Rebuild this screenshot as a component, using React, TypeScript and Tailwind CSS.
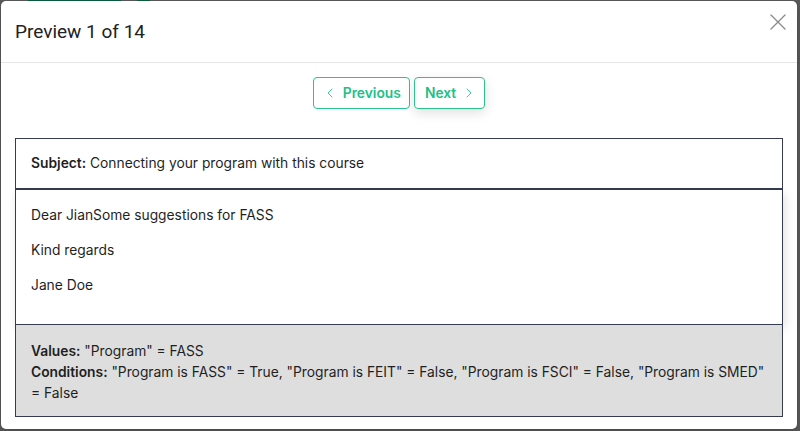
import { ChevronLeft, ChevronRight, X } from "lucide-react";

export default function App() {
  return (
    <div className="relative w-[800px] h-[431px] overflow-hidden bg-[#5a5a5a] pl-[1px] pt-[1px] pr-[3px] pb-[2px]">
      {/* page behind the overlay */}
      <div className="absolute top-0 left-[28px] w-[93px] h-[1px] bg-[#0b5e40]" />
      <div className="absolute top-0 left-[137px] w-[13px] h-[1px] bg-[#0b5e40]" />

      <div className="relative h-full rounded-[5px] bg-white shadow-[0_4px_12px_rgba(0,0,0,0.2)] font-['Roboto',sans-serif]">
        <div className="flex h-[62px] items-start justify-between border-b border-[#e6e6e6] pl-[14px] pr-[5px]">
          <h2 className="mt-[21px] text-[19px] leading-[20px] text-[#222]">Preview 1 of 14</h2>
          <X className="mt-[7px] h-[28px] w-[28px] text-[#8a8a8a]" strokeWidth={1.1} />
        </div>

        <div className="flex justify-center gap-[4px] pt-[14px] font-['Inter',sans-serif] text-[13.8px] font-semibold text-[#22bf86]">
          <button className="flex h-[32px] items-center gap-[5px] rounded-[4px] border border-[#2bc48c] bg-white pl-[8px] pr-[8px]">
            <ChevronLeft className="h-[16px] w-[16px]" strokeWidth={1.3} />
            Previous
          </button>
          <button className="flex h-[32px] items-center gap-[5px] rounded-[4px] border border-[#2bc48c] bg-white pl-[10px] pr-[7px] shadow-[0_4px_12px_rgba(0,0,0,0.12)]">
            Next
            <ChevronRight className="h-[16px] w-[16px]" strokeWidth={1.3} />
          </button>
        </div>

        <div className="mx-[14px] mt-[29px] text-[13.8px] text-[#1f1f1f] font-['Inter',sans-serif]">
          <div className="flex h-[52px] items-center border border-b-2 border-[#363b52] px-[15px]">
            <p>
              <span className="font-semibold">Subject:</span> Connecting your program with this course
            </p>
          </div>
          <div className="flex h-[134px] flex-col gap-[15px] border-x border-[#363b52] px-[15px] pt-[15px] shadow-[2px_4px_10px_rgba(0,0,0,0.12)]">
            <p className="leading-[20px]">Dear JianSome suggestions for FASS</p>
            <p className="leading-[20px]">Kind regards</p>
            <p className="leading-[20px]">Jane Doe</p>
          </div>
          <div className="h-[93px] border border-[#363b52] bg-[#dedede] pl-[15px] pr-[12px] pt-[16px] leading-[21px]">
            <p>
              <span className="font-semibold">Values:</span> "Program" = FASS
            </p>
            <p>
              <span className="font-semibold">Conditions:</span> "Program is FASS" = True, "Program is FEIT" = False, "Program is FSCI" = False, "Program is SMED" = False
            </p>
          </div>
        </div>
      </div>
    </div>
  );
}
